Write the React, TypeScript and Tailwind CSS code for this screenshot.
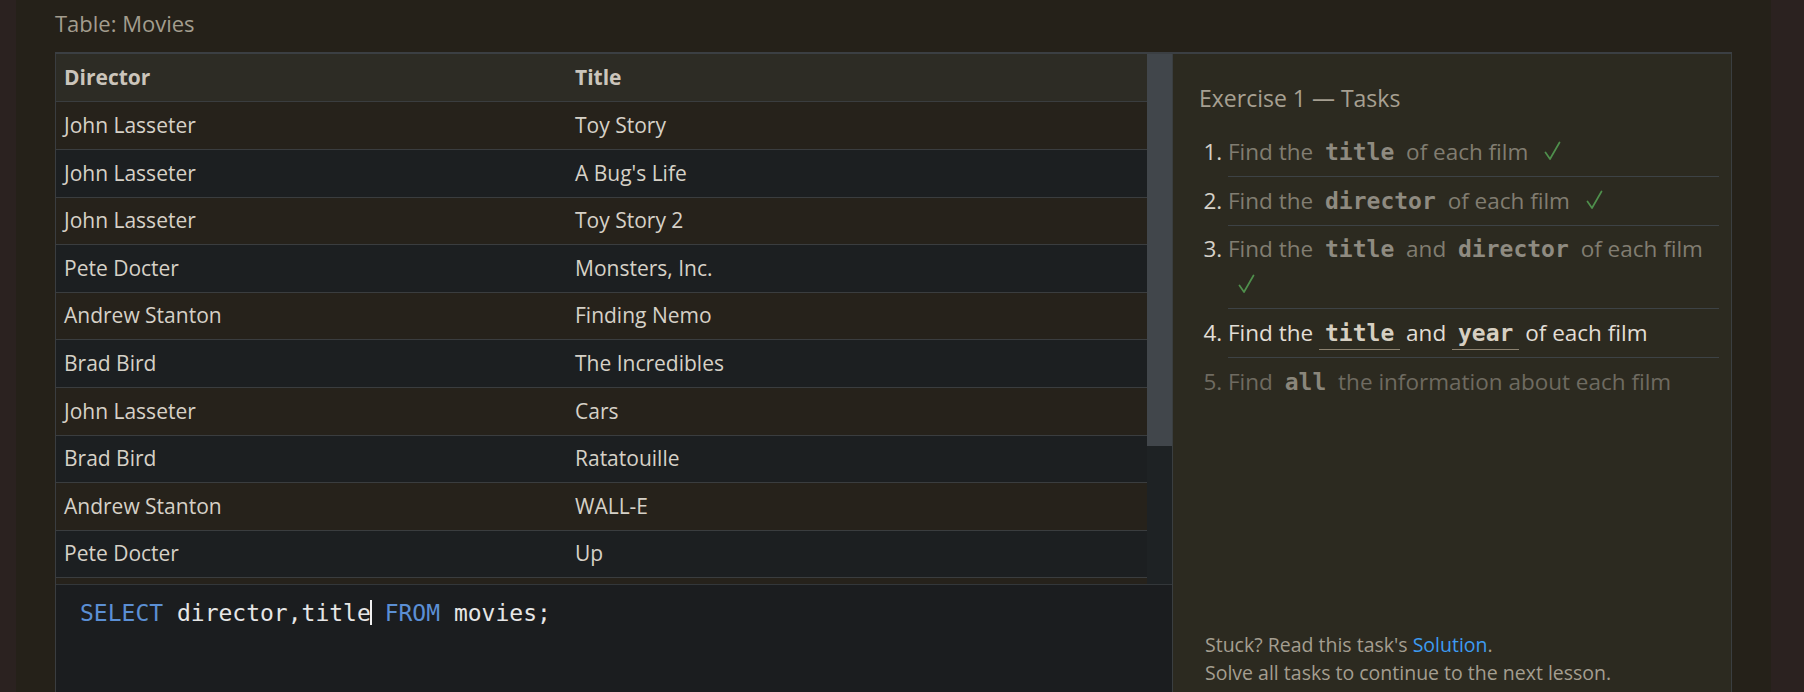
const rows: [string, string][] = [
  ["John Lasseter", "Toy Story"],
  ["John Lasseter", "A Bug's Life"],
  ["John Lasseter", "Toy Story 2"],
  ["Pete Docter", "Monsters, Inc."],
  ["Andrew Stanton", "Finding Nemo"],
  ["Brad Bird", "The Incredibles"],
  ["John Lasseter", "Cars"],
  ["Brad Bird", "Ratatouille"],
  ["Andrew Stanton", "WALL-E"],
  ["Pete Docter", "Up"],
];

function Code({ children, tone }: { children: string; tone: "done" | "active" | "todo" }) {
  const cls =
    tone === "active"
      ? "text-[#d6cfc2] border-b border-[#8c8270]"
      : tone === "done"
        ? "text-[#8f8b81]"
        : "text-[#8a867b]";
  return (
    <code
      className={`px-[6px] pb-[3px] font-['DejaVu_Sans_Mono',monospace] text-[23px] font-bold ${cls}`}
    >
      {children}
    </code>
  );
}

function Check() {
  return (
    <svg
      viewBox="0 0 17 19"
      className="ml-[10px] inline-block h-[19px] w-[17px] align-baseline"
      fill="none"
      stroke="#4f8f4c"
      strokeWidth="1.7"
      strokeLinecap="round"
      strokeLinejoin="round"
    >
      <path d="M1.5 11.5 L6 18 L15.5 1.5" />
    </svg>
  );
}

function TaskPanel() {
  return (
    <div className="flex flex-1 flex-col border-l border-r border-[#3a3e40] bg-[#2c2a20] pl-[26px] pr-[12px] pt-[28px]">
      <div className="text-[23px] leading-[32px] text-[#a7a092]">Exercise 1 — Tasks</div>
      <ol className="mt-[14px] list-decimal pl-[29px] text-[22.5px]">
        <li className="border-b border-[#3d4245] py-[5px] leading-[37px] text-[#817d71] marker:text-[#d5d1c9]">
          Find the <Code tone="done">title</Code> of each film <Check />
        </li>
        <li className="border-b border-[#3d4245] py-[5px] leading-[37px] text-[#817d71] marker:text-[#d5d1c9]">
          Find the <Code tone="done">director</Code> of each film <Check />
        </li>
        <li className="border-b border-[#3d4245] py-[5px] leading-[36px] text-[#817d71] marker:text-[#d5d1c9]">
          Find the <Code tone="done">title</Code> and <Code tone="done">director</Code> of each film{" "}
          <Check />
        </li>
        <li className="border-b border-[#3d4245] py-[5px] leading-[37px] text-[#e2ded6] marker:text-[#e2ded6]">
          Find the <Code tone="active">title</Code> and <Code tone="active">year</Code> of each film
        </li>
        <li className="py-[5px] leading-[37px] text-[#6f6b61] marker:text-[#6f6b61]">
          Find <Code tone="todo">all</Code> the information about each film
        </li>
      </ol>
      <div className="mt-auto pb-[5px] pl-[6px] text-[19.5px] leading-[28px] text-[#a49e90]">
        <div>
          Stuck? Read this task's <span className="text-[#3d9bf0]">Solution</span>.
        </div>
        <div>Solve all tasks to continue to the next lesson.</div>
      </div>
    </div>
  );
}

export default function App() {
  return (
    <div className="flex h-[692px] w-[1804px] overflow-hidden bg-[#2b2220] font-['Open_Sans',sans-serif]">
      <div className="w-[16px] shrink-0" />
      <div className="flex min-w-0 flex-1 flex-col bg-[#252119] px-[39px]">
        <div className="pb-[14px] pt-[8px] text-[22px] leading-[30px] text-[#a39d8e]">Table: Movies</div>
        <div className="flex min-h-0 flex-1 border-t-2 border-[#3b3f43]">
          <div className="flex w-[1117px] shrink-0 flex-col border-l border-[#3a3d40]">
            <div className="flex h-[530px] shrink-0">
              <div className="min-w-0 flex-1 overflow-hidden text-[21px] text-[#d6d1c7]">
                <div className="flex h-[48.4px] items-center border-b border-[#3a3d3f] bg-[#2d2c25] font-bold text-[#cbc5bb]">
                  <div className="w-[511px] px-[8px]">Director</div>
                  <div className="px-[8px]">Title</div>
                </div>
                {rows.map(([director, title], i) => (
                  <div
                    key={i}
                    className={`flex h-[47.6px] shrink-0 items-center border-b border-[#3a3d3f] ${
                      i % 2 === 0 ? "bg-[#26221b]" : "bg-[#1c1f21]"
                    }`}
                  >
                    <div className="w-[511px] px-[8px]">{director}</div>
                    <div className="px-[8px]">{title}</div>
                  </div>
                ))}
                <div className="h-[47.6px] bg-[#26221b]" />
              </div>
              <div className="w-[25px] shrink-0 bg-[#1e2224]">
                <div className="h-[392px] bg-[#41464b]" />
              </div>
            </div>
            <div className="flex-1 border-t border-[#33373a] bg-[#1b1d1f] pl-[24px] pt-[11px] font-['DejaVu_Sans_Mono',monospace] text-[23px] leading-[30px] text-[#e6e6e6]">
              <span className="text-[#5b8fd4]">SELECT</span> director,title
              <span className="-mx-px inline-block h-[25px] w-[2px] translate-y-[4px] bg-[#f0f0f0]" />{" "}
              <span className="text-[#5b8fd4]">FROM</span> movies;
            </div>
          </div>
          <TaskPanel />
        </div>
      </div>
      <div className="w-[33px] shrink-0" />
    </div>
  );
}
